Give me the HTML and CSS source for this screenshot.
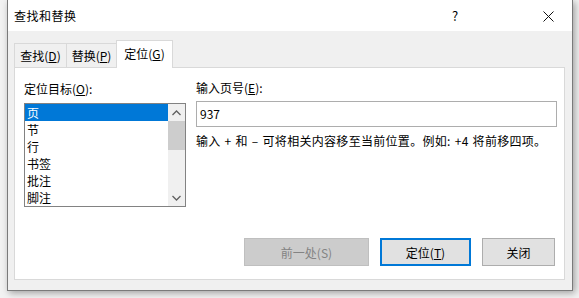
FILE: index.html
```html
<!DOCTYPE html>
<html lang="zh-CN">
<head>
    <meta charset="UTF-8">
    <title>查找和替换</title>
    <link rel="stylesheet" href="styles.css">
</head>
<body>
<div class="dialog">
    <div class="titlebar">
        <span class="title">查找和替换</span>
        <span class="help">?</span>
        <span class="close">
            <svg width="11" height="11" viewBox="0 0 11 11"><path d="M0.5 0.5 L10.5 10.5 M10.5 0.5 L0.5 10.5" stroke="#111" stroke-width="1"/></svg>
        </span>
    </div>
    <div class="body">
        <div class="tabs">
            <div class="tab">查找(<u>D</u>)</div>
            <div class="tab">替换(<u>P</u>)</div>
            <div class="tab active">定位(<u>G</u>)</div>
        </div>
        <div class="panel">
            <div class="row">
                <div class="col-left">
                    <div class="label">定位目标(<u>O</u>):</div>
                    <div class="listbox">
                        <div class="items">
                            <div class="item selected">页</div>
                            <div class="item">节</div>
                            <div class="item">行</div>
                            <div class="item">书签</div>
                            <div class="item">批注</div>
                            <div class="item">脚注</div>
                        </div>
                        <div class="scrollbar">
                            <div class="arrow">
                                <svg width="9" height="6" viewBox="0 0 9 6"><path d="M0.5 5 L4.5 1 L8.5 5" fill="none" stroke="#606060" stroke-width="1.3"/></svg>
                            </div>
                            <div class="thumb"></div>
                            <div class="track"></div>
                            <div class="arrow">
                                <svg width="9" height="6" viewBox="0 0 9 6"><path d="M0.5 1 L4.5 5 L8.5 1" fill="none" stroke="#606060" stroke-width="1.3"/></svg>
                            </div>
                        </div>
                    </div>
                </div>
                <div class="col-right">
                    <div class="label">输入页号(<u>E</u>):</div>
                    <div class="textbox">937</div>
                    <div class="hint">输入 + 和 – 可将相关内容移至当前位置。例如: +4 将前移四项。</div>
                </div>
            </div>
            <div class="buttons">
                <div class="btn disabled wide">前一处(S)</div>
                <div class="btn default">定位(<u>T</u>)</div>
                <div class="btn narrow">关闭</div>
            </div>
        </div>
    </div>
</div>
</body>
</html>
```

FILE: styles.css
```css
body {
    margin: 0;
    width: 579px;
    height: 298px;
    overflow: hidden;
    background-color: #f2f2f2;
    font-family: "Noto Sans CJK SC", "Microsoft YaHei", sans-serif;
    font-size: 12px;
    color: #000;
}
u { text-decoration: underline; text-underline-offset: 1px; }

.dialog {
    margin-left: 7px;
    width: 566px;
    height: 291px;
    box-sizing: border-box;
    border: 1px solid #7a7a7a;
    border-top: none;
    background-color: #f0f0f0;
    box-shadow: 2px 2px 7px rgba(0,0,0,0.35);
    display: flex;
    flex-direction: column;
}

.titlebar {
    height: 31px;
    background-color: #fff;
    display: flex;
    align-items: center;
    padding-left: 6px;
}
.title { flex: 1; line-height: 16px; letter-spacing: 0.5px; }
.help { width: 20px; font-size: 13px; margin-right: 71px; }
.close { width: 29px; display: flex; padding-top: 1px; }

.body {
    flex: 1;
    padding: 9px 7px 10px 6px;
    display: flex;
    flex-direction: column;
}

.tabs { display: flex; align-items: flex-end; height: 27px; position: relative; z-index: 1; }
.tab {
    height: 24px;
    box-sizing: border-box;
    border: 1px solid #d9d9d9;
    border-bottom: none;
    line-height: 24px;
    white-space: nowrap;
    text-align: center;
    margin-right: -1px;
}
.tab:first-child { width: 53px; }
.tab:nth-child(2) { width: 51px; }
.tab.active {
    height: 28px;
    width: 57px;
    background-color: #fff;
    line-height: 26px;
    margin-bottom: -1px;
}

.panel {
    height: 213px;
    box-sizing: border-box;
    border: 1px solid #d9d9d9;
    background-color: #fff;
    padding: 13px 7px 13px 9px;
    display: flex;
    flex-direction: column;
}

.row { display: flex; gap: 10px; }
.col-left { width: 162px; }
.col-right { flex: 1; }

.label { line-height: 16px; height: 16px; margin-bottom: 6px; white-space: nowrap; }
.col-right .label { margin-top: -1px; margin-bottom: 5px; }

.listbox {
    height: 104px;
    box-sizing: border-box;
    border: 1px solid #828282;
    display: flex;
}
.items { flex: 1; overflow: hidden; }
.item { height: 17px; line-height: 17px; padding-left: 2px; }
.item.selected { background-color: #0078d7; color: #fff; }

.scrollbar {
    width: 17px;
    background-color: #f0f0f0;
    display: flex;
    flex-direction: column;
}
.arrow { height: 17px; display: flex; align-items: center; justify-content: center; }
.thumb { height: 29px; background-color: #cdcdcd; }
.track { flex: 1; }

.textbox {
    height: 26px;
    box-sizing: border-box;
    border: 1px solid #adadad;
    padding-left: 3px;
    line-height: 24px;
}
.hint { margin-top: 6px; line-height: 16px; white-space: nowrap; letter-spacing: 0.3px; word-spacing: 1px; }

.buttons {
    margin-top: auto;
    margin-right: 2px;
    display: flex;
    justify-content: flex-end;
    gap: 11px;
}
.btn {
    height: 28px;
    width: 91px;
    box-sizing: border-box;
    border: 1px solid #adadad;
    background-color: #e1e1e1;
    display: flex;
    align-items: center;
    justify-content: center;
}
.btn.wide { width: 125px; }
.btn.narrow { width: 73px; }
.btn.disabled { background-color: #cccccc; border-color: #bfbfbf; color: #838383; }
.btn.default { border: 2px solid #0078d7; }
```
